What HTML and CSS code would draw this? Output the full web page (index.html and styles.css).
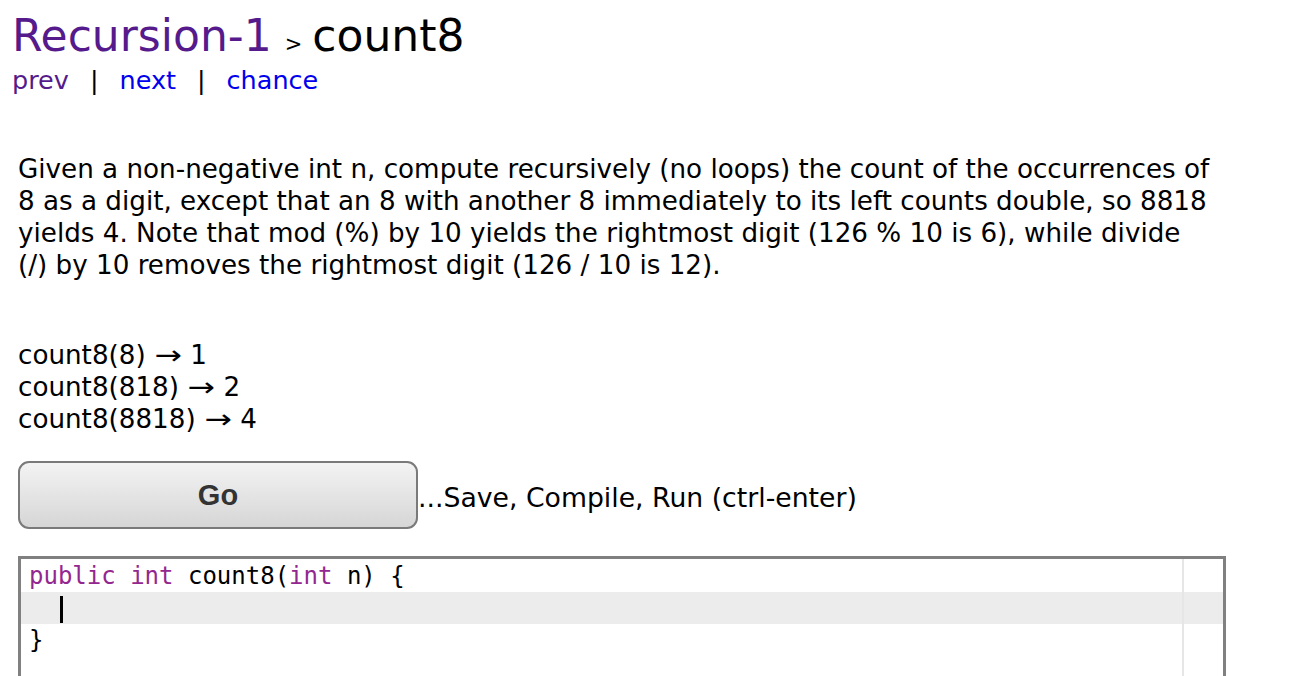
FILE: index.html
```html
<!DOCTYPE html>
<html>
<head>
<meta charset="utf-8">
<title>CodingBat Java Recursion-1 count8</title>
<link rel="stylesheet" href="styles.css">
</head>
<body>
<div class="page">
  <header class="head">
    <h1 class="title"><a class="visited" href="#">Recursion-1</a> <span class="sep">&gt;</span> <span class="name">count8</span></h1>
    <nav class="nav"><a class="visited" href="#">prev</a><span class="bar">|</span><a href="#">next</a><span class="bar">|</span><a href="#">chance</a></nav>
  </header>
  <main class="content">
    <p class="desc">Given a non-negative int n, compute recursively (no loops) the count of the occurrences of 8 as a digit, except that an 8 with another 8 immediately to its left counts double, so 8818 yields 4. Note that mod (%) by 10 yields the rightmost digit (126 % 10 is 6), while divide (/) by 10 removes the rightmost digit (126 / 10 is 12).</p>
    <div class="examples">
      <div>count8(8) <span class="arr">&rarr;</span> 1</div>
      <div>count8(818) <span class="arr">&rarr;</span> 2</div>
      <div>count8(8818) <span class="arr">&rarr;</span> 4</div>
    </div>
    <div class="run">
      <button class="go" type="button">Go</button>
      <span class="hint">...Save, Compile, Run (ctrl-enter)</span>
    </div>
    <div class="editor">
      <div class="margin-line"></div>
      <div class="line"><span class="kw">public</span> <span class="kw">int</span> count8(<span class="kw">int</span> n) {</div>
      <div class="line active"><span class="indent">  </span><span class="cursor"></span></div>
      <div class="line">}</div>
      <div class="line"></div>
    </div>
  </main>
</div>
</body>
</html>
```
FILE: styles.css
```css
html, body {
  margin: 0;
  padding: 0;
  background: #ffffff;
}
body {
  font-family: "DejaVu Sans", Verdana, sans-serif;
  color: #000;
  overflow: hidden;
}
.page {
  padding: 8px 8px 0 10px;
}
.head {
  padding-left: 2px;
}
.title {
  margin: 0;
  height: 56px;
  font-weight: normal;
  font-size: 44px;
  line-height: 56px;
  white-space: nowrap;
}
.title a {
  text-decoration: none;
}
.visited {
  color: #551a8b;
}
.sep {
  font-size: 21px;
  line-height: 20px;
  margin: 0 -4px 0 -1px;
}
.name {
  color: #000;
}
.nav {
  height: 32px;
  font-size: 25.5px;
  line-height: 32px;
}
.nav a {
  text-decoration: none;
  color: #0000ee;
}
.nav a.visited {
  color: #551a8b;
}
.bar {
  padding: 0 21px;
}
.content {
  padding-left: 8px;
}
.desc {
  margin: 57px 0 0 0;
  font-size: 26.2px;
  line-height: 32px;
  width: 1196px;
}
.examples {
  margin-top: 58px;
  font-size: 26.2px;
  line-height: 32px;
}
.arr {
  display: inline-block;
  transform: scaleX(1.25);
  margin: 0 3px;
}
.run {
  display: flex;
  align-items: center;
  margin-top: 26px;
}
.go {
  width: 400px;
  height: 68px;
  border: 2px solid #7a7a7a;
  border-radius: 11px;
  background: linear-gradient(#f3f3f3, #d6d6d6);
  font-family: "Liberation Sans", Arial, sans-serif;
  font-weight: bold;
  font-size: 29px;
  color: #333;
  padding: 0;
}
.hint {
  font-size: 26.7px;
  margin-top: 4px;
}
.editor {
  position: relative;
  margin-top: 27px;
  width: 1202px;
  height: 200px;
  border: 3px solid #808080;
  border-bottom: none;
  padding-top: 1px;
  font-family: "DejaVu Sans Mono", monospace;
  font-size: 24px;
}
.margin-line {
  position: absolute;
  top: 0;
  bottom: 0;
  left: 1161px;
  width: 2px;
  background: #e6e6e6;
}
.line {
  height: 32px;
  line-height: 32px;
  padding-left: 8px;
  white-space: pre;
}
.line.active {
  background: #ececec;
}
.kw {
  color: #93278f;
}
.cursor {
  display: inline-block;
  width: 3px;
  height: 27px;
  background: #000;
  vertical-align: middle;
  margin-left: 2px;
}
```
